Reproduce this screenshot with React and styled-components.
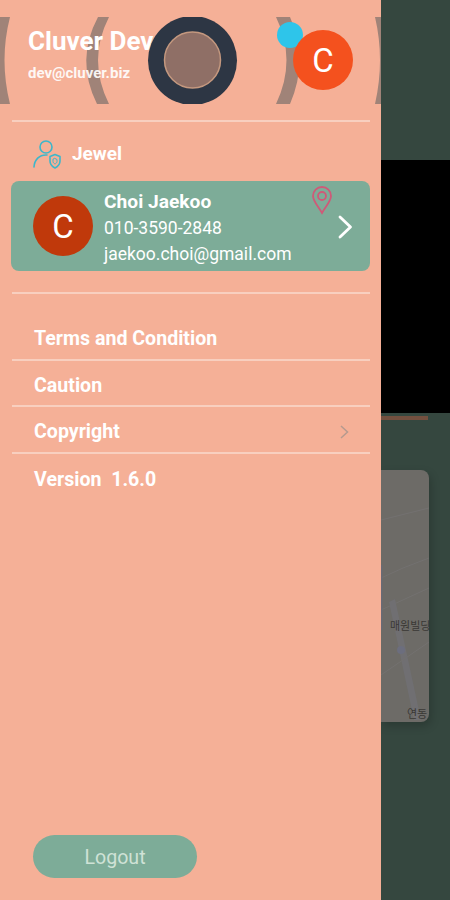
import React from "react";
import styled, { createGlobalStyle } from "styled-components";

const Global = createGlobalStyle`
  html, body { margin: 0; padding: 0; background: #35473f; }
  * { box-sizing: border-box; }
  body { font-family: Roboto, "Noto Sans CJK KR", sans-serif; }
`;
const Screen = styled.div`
  display: flex;
  width: 450px;
  height: 900px;
  overflow: hidden;
`;
const Drawer = styled.aside`
  flex: 0 0 381px;
  display: flex;
  flex-direction: column;
  background: #f5b097;
  color: #fff;
  position: relative;
  z-index: 1;
`;
const Header = styled.header`
  position: relative;
  height: 120px;
  padding: 25px 0 0 28px;
`;
const HeaderArt = styled.svg`
  position: absolute;
  left: 0;
  top: 0;
  display: block;
`;
const HeaderText = styled.div`
  position: relative;
`;
const HeaderName = styled.div`
  font-size: 26px;
  line-height: 32px;
  font-weight: 700;
  white-space: nowrap;
`;
const HeaderMail = styled.div`
  font-size: 15px;
  line-height: 18px;
  font-weight: 700;
  margin-top: 7px;
  opacity: 0.9;
`;
const Avatar = styled.div`
  flex: none;
  width: 60px;
  height: 60px;
  border-radius: 50%;
  display: flex;
  align-items: center;
  justify-content: center;
  color: #fff;
  font-size: 33px;
  background: ${(p) => p.$bg};
`;
const HeaderDot = styled.span`
  position: absolute;
  left: 277px;
  top: 22px;
  width: 26px;
  height: 26px;
  border-radius: 50%;
  background: #2ec5ea;
`;
const HeaderAvatar = styled(Avatar)`
  position: absolute;
  left: 293px;
  top: 30px;
`;
const Rule = styled.hr`
  flex: none;
  width: 358px;
  height: 2px;
  margin: ${(p) => p.$top || 0}px 0 0 12px;
  border: 0;
  background: #f8cfbf;
`;
const SectionTitle = styled.div`
  display: flex;
  align-items: center;
  gap: 10px;
  height: 59px;
  padding: 4px 0 0 32px;
  font-size: 19px;
  font-weight: 700;
`;
const Card = styled.div`
  display: flex;
  align-items: center;
  position: relative;
  width: 359px;
  height: 90px;
  margin-left: 11px;
  padding-left: 22px;
  border-radius: 8px;
  background: #7dac98;
`;
const CardInfo = styled.div`
  margin: 3px 0 0 11px;
  display: flex;
  flex-direction: column;
`;
const CardName = styled.div`
  font-size: 19.2px;
  line-height: 27px;
  font-weight: 700;
`;
const CardLine = styled.div`
  font-size: 17.5px;
  line-height: 26px;
`;
const CardPin = styled.svg`
  position: absolute;
  left: 300px;
  top: 4px;
`;
const CardChevron = styled.svg`
  position: absolute;
  left: 326px;
  top: 33px;
`;
const Menu = styled.nav`
  display: flex;
  flex-direction: column;
  margin-top: 20px;
`;
const MenuRow = styled.div`
  display: flex;
  align-items: center;
  justify-content: space-between;
  width: 358px;
  height: 46.5px;
  margin-left: 12px;
  padding: 5px 21px 0 22px;
  font-size: 19.6px;
  font-weight: 700;
  white-space: pre;
  border-bottom: ${(p) => (p.$last ? "0" : "2px solid #f8cfbf")};
`;
const Logout = styled.button`
  width: 164px;
  height: 43px;
  margin: auto 0 22px 33px;
  padding: 2px 0 0;
  border: 0;
  border-radius: 22px;
  background: #7dac98;
  color: #cfe2d6;
  font-family: inherit;
  font-size: 19.6px;
`;
const Backdrop = styled.main`
  flex: 1;
  display: flex;
  flex-direction: column;
  background: #35473f;
`;
const TopPane = styled.div`
  height: 160px;
  background: #35473f;
`;
const BlackPane = styled.div`
  height: 253px;
  background: #000;
`;
const Accent = styled.div`
  width: 47px;
  height: 4px;
  margin-top: 3px;
  background: #73503f;
`;
const MapCard = styled.div`
  position: relative;
  width: 48px;
  height: 252px;
  margin-top: 50px;
  overflow: hidden;
  border-radius: 0 8px 8px 0;
  background: #6d6b67;
  box-shadow: 2px 4px 10px rgba(0, 0, 0, 0.2);
`;
const MapLines = styled.svg`
  position: absolute;
  inset: 0;
`;
const MapLabel = styled.span`
  position: absolute;
  left: ${(p) => p.$x}px;
  top: ${(p) => p.$y}px;
  font-family: "Noto Sans CJK KR", sans-serif;
  font-size: 11px;
  line-height: 14px;
  white-space: nowrap;
  color: #3a3835;
`;

const Arcs = () => (
  <HeaderArt width="381" height="121" viewBox="0 0 381 121">
    <g fill="#a08378">
      <path d="M0 17H10Q-1 60 10 104H0Z" />
      <path d="M98 17H109Q87 60 109 104H97Q75 60 98 17Z" />
      <path d="M276 17H290Q309 60 290 104H276Q297 60 276 17Z" />
      <path d="M375 17H381V104H375Q385 60 375 17Z" />
    </g>
  </HeaderArt>
);

const Ring = () => (
  <HeaderArt width="381" height="121" viewBox="0 0 381 121">
    <defs>
      <clipPath id="ringClip">
        <rect x="0" y="17" width="381" height="87" />
      </clipPath>
    </defs>
    <g clipPath="url(#ringClip)">
      <circle cx="192.5" cy="60.5" r="44.5" fill="#2d3644" />
      <circle cx="192.5" cy="60" r="28" fill="#8f6f66" stroke="#c4987f" strokeWidth="1.5" />
    </g>
  </HeaderArt>
);

const JewelIcon = () => (
  <svg width="30" height="30" viewBox="0 0 30 30" fill="none" stroke="#3cb7cb" strokeWidth="1.6" strokeLinecap="round" strokeLinejoin="round">
    <circle cx="14" cy="8" r="6" />
    <path d="M2 28C2.500 21 7 15.500 15 16" />
    <path d="M23 15.500L28 17.500V22C28 25 26 27.500 23 29C20 27.500 18 25 18 22V17.500Z" />
    <path d="M23 19.500L25 20.500V22.500C25 23.500 24 24.500 23 25C22 24.500 21 23.500 21 22.500V20.500Z" strokeWidth="1" />
  </svg>
);

export default function App() {
  return (
    <Screen>
      <Global />
      <Drawer>
        <Header>
          <Arcs />
          <HeaderText>
            <HeaderName>Cluver Dev</HeaderName>
            <HeaderMail>dev@cluver.biz</HeaderMail>
          </HeaderText>
          <Ring />
          <HeaderDot />
          <HeaderAvatar $bg="#f4511e">C</HeaderAvatar>
        </Header>
        <Rule />
        <SectionTitle>
          <JewelIcon />
          Jewel
        </SectionTitle>
        <Card>
          <Avatar $bg="#c0390b">C</Avatar>
          <CardInfo>
            <CardName>Choi Jaekoo</CardName>
            <CardLine>010-3590-2848</CardLine>
            <CardLine>jaekoo.choi@gmail.com</CardLine>
          </CardInfo>
          <CardPin width="22" height="30" viewBox="0 0 22 30" fill="none" stroke="#cf5a78" strokeWidth="1.800">
            <path d="M11 28C7 21 2 16 2 11A9 9 0 0 1 20 11C20 16 15 21 11 28Z" />
            <circle cx="11" cy="11" r="4" />
          </CardPin>
          <CardChevron width="16" height="26" viewBox="0 0 16 26" fill="none" stroke="#fff" strokeWidth="2.800" strokeLinecap="round" strokeLinejoin="round">
            <path d="M3 3L13.500 13L3 23" />
          </CardChevron>
        </Card>
        <Rule $top={21} />
        <Menu>
          <MenuRow>Terms and Condition</MenuRow>
          <MenuRow>Caution</MenuRow>
          <MenuRow>
            Copyright
            <svg width="9" height="14" viewBox="0 0 9 14" fill="none" stroke="#b59a8f" strokeWidth="1.500">
              <path d="M1 1L7.500 7L1 13" />
            </svg>
          </MenuRow>
          <MenuRow $last>{"Version  1.6.0"}</MenuRow>
        </Menu>
        <Logout>Logout</Logout>
      </Drawer>
      <Backdrop>
        <TopPane />
        <BlackPane />
        <Accent />
        <MapCard>
          <MapLines width="48" height="252" viewBox="0 0 48 252" fill="none">
            <path d="M0 50L48 38M0 108L22 98L48 88M0 140L48 118" stroke="#737170" strokeWidth="1" />
            <path d="M8 132L14 129L40 250L33 250Z" fill="#706f72" />
            <path d="M0 95V160" stroke="#6a6a74" strokeWidth="3" />
            <path d="M0 205L48 172" stroke="#737170" strokeWidth="1" />
            <circle cx="20" cy="180" r="4" fill="#6c6e7e" />
          </MapLines>
          <MapLabel $x={9} $y={148}>매원빌딩</MapLabel>
          <MapLabel $x={26} $y={236}>연동</MapLabel>
        </MapCard>
      </Backdrop>
    </Screen>
  );
}
